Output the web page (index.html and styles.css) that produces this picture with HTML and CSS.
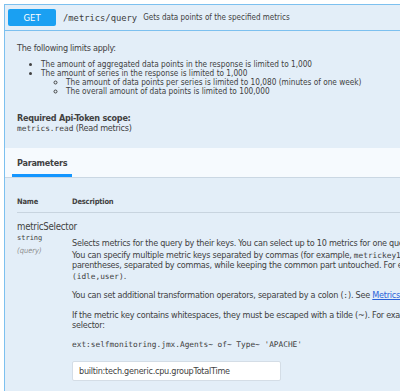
FILE: index.html
```html
<!DOCTYPE html>
<html lang="en">
<head>
  <meta charset="UTF-8" />
  <title>Metrics API</title>
  <link rel="stylesheet" href="styles.css">
</head>
<body>
  <div class="opblock">
    <div class="opblock-summary">
      <span class="method">GET</span>
      <span class="path">/metrics/query</span>
      <span class="summary">Gets data points of the specified metrics</span>
    </div>

    <div class="opblock-description">
      <p>The following limits apply:</p>
      <ul class="limits">
        <li>The amount of aggregated data points in the response is limited to 1,000</li>
        <li>The amount of series in the response is limited to 1,000
          <ul>
            <li>The amount of data points per series is limited to 10,080 (minutes of one week)</li>
            <li>The overall amount of data points is limited to 100,000</li>
          </ul>
        </li>
      </ul>
      <p class="scope-title">Required Api-Token scope:</p>
      <p class="scope"><code>metrics.read</code> (Read metrics)</p>
    </div>

    <div class="section-header">
      <h4 class="tab">Parameters</h4>
    </div>

    <div class="parameters">
      <div class="param-head">
        <div class="col-name">Name</div>
        <div class="col-desc">Description</div>
      </div>

      <div class="param-row">
        <div class="col-name">
          <div class="param-name">metricSelector</div>
          <div class="param-type">string</div>
          <div class="param-in">(query)</div>
        </div>
        <div class="col-desc markdown">
          <p class="lead">Selects metrics for the query by their keys. You can select up to 10 metrics for one query.</p>
          <p>You can specify multiple metric keys separated by commas (for example, <code>metrickey1,metrickey2</code>). To select multiple metrics belonging to the same parent, list the last part of the required metric keys in<br>parentheses, separated by commas, while keeping the common part untouched. For example, to list the <code>builtin:host.cpu.idle</code> and <code>builtin:host.cpu.user</code> metric, write: <code>builtin:host.cpu.</code><br><code>(idle,user)</code>.</p>
          <p>You can set additional transformation operators, separated by a colon (<code>:</code>). See <a href="#">Metrics selector transformations</a> in Dynatrace Documentation for additional information.</p>
          <p>If the metric key contains whitespaces, they must be escaped with a tilde (~). For example, to query the metric with the key of ext:selfmonitoring.jmx.Agents Type "APACHE" you must specify this<br>selector:</p>
          <pre>ext:selfmonitoring.jmx.Agents~ of~ Type~ 'APACHE'</pre>
          <input class="param-input" type="text" value="builtin:tech.generic.cpu.groupTotalTime">
        </div>
      </div>
    </div>
  </div>
</body>
</html>
```

FILE: styles.css
```css
body {
  margin: 0;
  padding: 4px 0 0 4px;
  background: #fff;
  overflow: hidden;
  font-family: "DejaVu Sans Condensed", sans-serif;
  color: #414141;
}

code, pre {
  font-family: "DejaVu Sans Mono", monospace;
  letter-spacing: normal;
}

.opblock {
  width: 1000px;
  border: 1px solid #7cc0ef;
  border-right: none;
  background: #e3eef8;
}

.opblock-summary {
  display: flex;
  align-items: center;
  height: 25px;
  padding: 0 3px;
  border-bottom: 1px solid #7cc0ef;
}

.method {
  width: 48px;
  height: 17px;
  line-height: 17px;
  background: #1aa0f2;
  color: #fff;
  text-align: center;
  font-size: 9.5px;
  border-radius: 2px;
}

.path {
  margin-left: 7px;
  font-family: "DejaVu Sans Mono", monospace;
  font-size: 8.8px;
  color: #3b3b3b;
}

.summary {
  margin-left: 6px;
  font-size: 8px;
}

.opblock-description {
  padding: 12px 12px 14px;
}

.opblock-description p {
  margin: 0;
  font-size: 9px;
  letter-spacing: -0.25px;
}

.limits {
  margin: 7px 0 0;
  padding-left: 24px;
  font-size: 8.2px;
  line-height: 9px;
}

.limits ul {
  margin: 0;
  padding-left: 25px;
  list-style: circle;
}

.opblock-description .scope-title {
  margin-top: 17px;
  font-weight: bold;
}

.scope {
  line-height: 11px;
}

.scope code {
  font-size: 7.8px;
}

.section-header {
  background: #f6fafe;
  padding: 0 7px;
  border-bottom: 1px solid #cad7e3;
}

.tab {
  display: inline-block;
  margin: 0;
  padding: 10px 5px 6px;
  font-size: 9px;
  letter-spacing: -0.25px;
  font-weight: bold;
  border-bottom: 3px solid #1496ff;
}

.parameters {
  padding: 19px 12px 0;
}

.param-head {
  display: flex;
  font-size: 7.5px;
  letter-spacing: -0.2px;
  font-weight: bold;
  padding-bottom: 6px;
  border-bottom: 1px solid #c8d4df;
}

.col-name {
  width: 55px;
  flex-shrink: 0;
}

.param-row {
  display: flex;
  padding-top: 8px;
  padding-bottom: 10px;
}

.param-name {
  font-size: 9.6px;
  letter-spacing: -0.25px;
}

.param-type {
  margin-top: 2px;
  font-family: "DejaVu Sans Mono", monospace;
  font-size: 7px;
}

.param-in {
  margin-top: 4px;
  font-size: 7.5px;
  font-style: italic;
  color: #909090;
}

.markdown {
  padding-top: 17px;
  font-size: 9px;
  letter-spacing: -0.25px;
  line-height: 10.5px;
}

.markdown p {
  margin: 0 0 9px;
}

.markdown .lead {
  margin-bottom: 1px;
}

.markdown code {
  font-size: 7.8px;
  line-height: 0;
}

.markdown a {
  color: #2a62d8;
}

.markdown pre {
  margin: 8px 0 0;
  font-size: 7.8px;
}

.param-input {
  margin-top: 11px;
  width: 209px;
  height: 20px;
  box-sizing: border-box;
  padding: 0 6px;
  border: 1px solid #d4dde6;
  border-radius: 2px;
  background: #fff;
  font-family: "DejaVu Sans Condensed", sans-serif;
  font-size: 9px;
  letter-spacing: -0.25px;
  color: #414141;
}
```
